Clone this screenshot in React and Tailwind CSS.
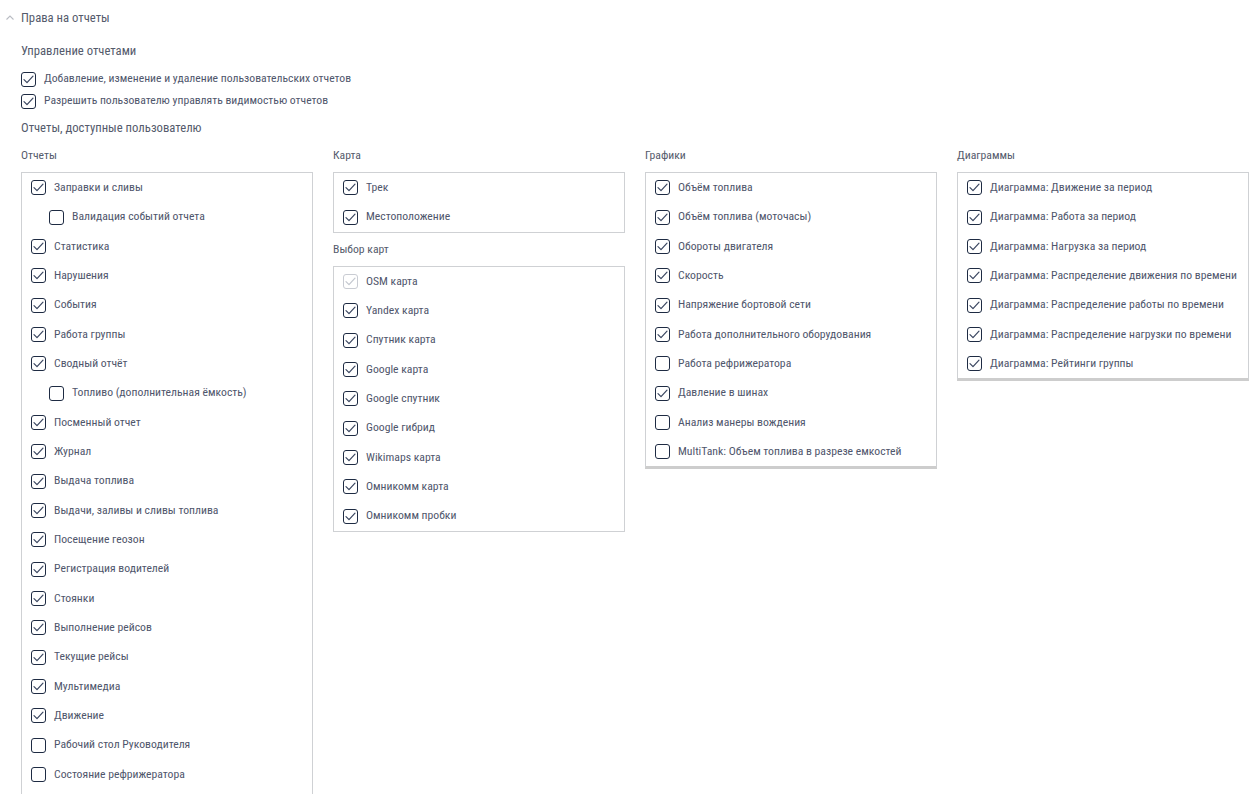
import React from 'react';

// Чекбокс в стиле формы
const Box = ({ checked, disabled }) => {
  const border = disabled ? 'border-[#c9ccd3]' : 'border-[#1e2b43]';
  const stroke = disabled ? '#c3c7cf' : '#3a4660';
  return (
    <span className={`w-[15px] h-[15px] shrink-0 rounded-[3px] border-[1.5px] ${border} bg-white flex items-center justify-center`}>
      {checked && (
        <svg width="11" height="9" viewBox="0 0 11 9" fill="none">
          <path d="M1 4.6 L4 7.6 L10 1.2" stroke={stroke} strokeWidth="1.2" strokeLinecap="round" strokeLinejoin="round" />
        </svg>
      )}
    </span>
  );
};

const Row = ({ label, checked, disabled, indent }) => (
  <div className={`h-[29.35px] flex items-center gap-[8px] ${indent ? 'pl-[27px]' : 'pl-[9px]'}`}>
    <Box checked={checked} disabled={disabled} />
    <span className="text-[11.7px] text-[#4f566c] whitespace-nowrap">{label}</span>
  </div>
);

const Group = ({ title, items, shadow, extra = '' }) => (
  <div>
    <div className="text-[11.7px] text-[#555b6c] h-[17px] leading-[17px] mb-[8px]">{title}</div>
    <div className={`border border-[#cfd1d4] ${shadow ? 'border-b-[3px] border-b-[#cdcdcd]' : ''} ${extra}`}>
      {items.map((it, i) => (
        <Row key={i} label={it[0]} checked={it[1]} disabled={it[2] === 'd'} indent={it[2] === 'i'} />
      ))}
    </div>
  </div>
);

const reports = [
  ['Заправки и сливы', true],
  ['Валидация событий отчета', false, 'i'],
  ['Статистика', true],
  ['Нарушения', true],
  ['События', true],
  ['Работа группы', true],
  ['Сводный отчёт', true],
  ['Топливо (дополнительная ёмкость)', false, 'i'],
  ['Посменный отчет', true],
  ['Журнал', true],
  ['Выдача топлива', true],
  ['Выдачи, заливы и сливы топлива', true],
  ['Посещение геозон', true],
  ['Регистрация водителей', true],
  ['Стоянки', true],
  ['Выполнение рейсов', true],
  ['Текущие рейсы', true],
  ['Мультимедиа', true],
  ['Движение', true],
  ['Рабочий стол Руководителя', false],
  ['Состояние рефрижератора', false],
];

const mapItems = [
  ['Трек', true],
  ['Местоположение', true],
];

const mapKinds = [
  ['OSM карта', true, 'd'],
  ['Yandex карта', true],
  ['Спутник карта', true],
  ['Google карта', true],
  ['Google спутник', true],
  ['Google гибрид', true],
  ['Wikimaps карта', true],
  ['Омникомм карта', true],
  ['Омникомм пробки', true],
];

const charts = [
  ['Объём топлива', true],
  ['Объём топлива (моточасы)', true],
  ['Обороты двигателя', true],
  ['Скорость', true],
  ['Напряжение бортовой сети', true],
  ['Работа дополнительного оборудования', true],
  ['Работа рефрижератора', false],
  ['Давление в шинах', true],
  ['Анализ манеры вождения', false],
  ['MultiTank: Объем топлива в разрезе емкостей', false],
];

const diagrams = [
  ['Диаграмма: Движение за период', true],
  ['Диаграмма: Работа за период', true],
  ['Диаграмма: Нагрузка за период', true],
  ['Диаграмма: Распределение движения по времени', true],
  ['Диаграмма: Распределение работы по времени', true],
  ['Диаграмма: Распределение нагрузки по времени', true],
  ['Диаграмма: Рейтинги группы', true],
];

const App = () => {
  return (
    <div className="h-[794px] overflow-hidden bg-white font-['Roboto_Condensed','Liberation_Sans_Narrow',Roboto,sans-serif]">
      {/* Заголовок раздела */}
      <div className="h-[36px] flex items-center pl-[5px]">
        <svg width="10" height="10" viewBox="0 0 10 10" fill="none" className="mr-[6px]">
          <path d="M1.5 6.5 L5 3 L8.5 6.5" stroke="#b9bcc3" strokeWidth="1.1" />
        </svg>
        <span className="text-[12.7px] text-[#555b6c]">Права на отчеты</span>
      </div>

      <div className="pl-[21px]">
        <div className="text-[12.7px] text-[#555b6c] h-[28px] flex items-center mt-[1px]">Управление отчетами</div>
        <div className="mt-[3px]">
          <div className="h-[22px] flex items-center gap-[8px]">
            <Box checked />
            <span className="text-[11.7px] text-[#4f566c]">Добавление, изменение и удаление пользовательских отчетов</span>
          </div>
          <div className="h-[22px] flex items-center gap-[8px]">
            <Box checked />
            <span className="text-[11.7px] text-[#4f566c]">Разрешить пользователю управлять видимостью отчетов</span>
          </div>
        </div>
        <div className="text-[12.7px] text-[#555b6c] h-[32px] flex items-center">Отчеты, доступные пользователю</div>

        <div className="grid grid-cols-[292px_292px_292px_292px] gap-x-[20px] mt-[3px] items-start">
          <Group title="Отчеты" items={reports} extra="pb-[20px]" />
          <div className="flex flex-col">
            <Group title="Карта" items={mapItems} />
            <div className="mt-[8px]">
              <Group title="Выбор карт" items={mapKinds} />
            </div>
          </div>
          <Group title="Графики" items={charts} shadow />
          <Group title="Диаграммы" items={diagrams} shadow />
        </div>
      </div>
    </div>
  );
};

export default App;
